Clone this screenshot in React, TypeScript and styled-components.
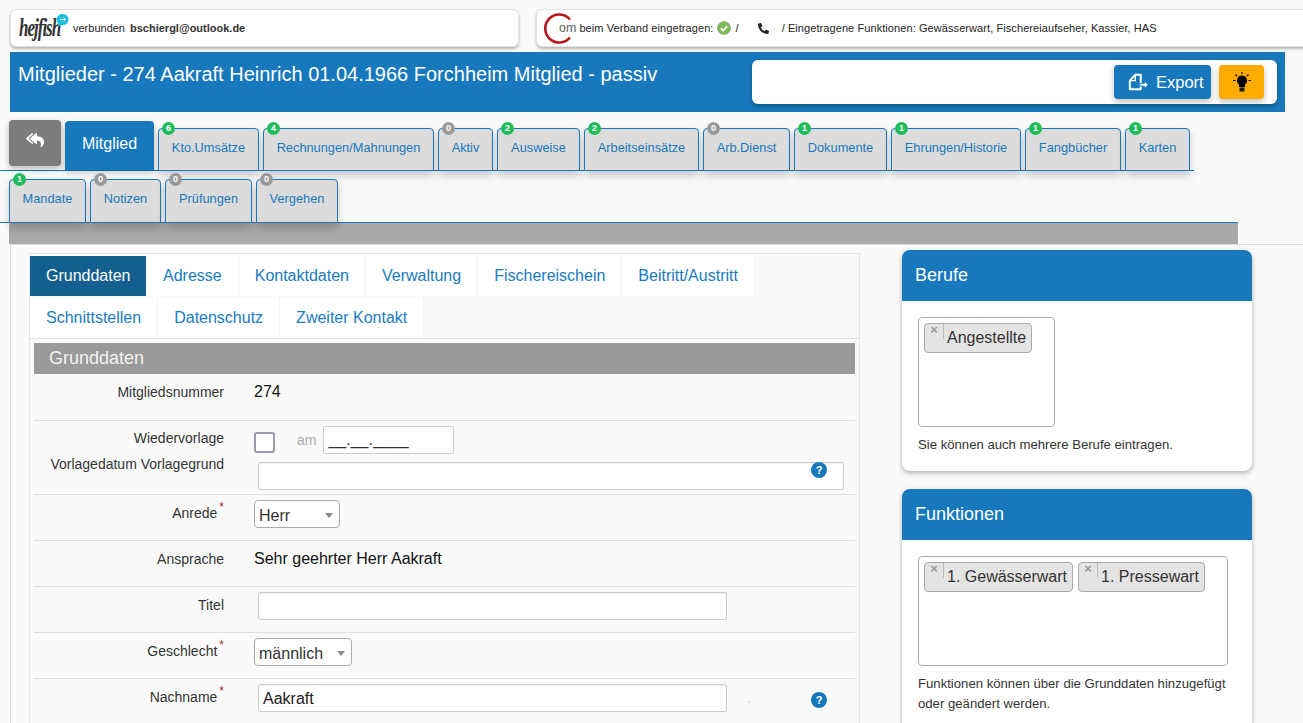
import * as React from 'react';
import styled, { createGlobalStyle } from 'styled-components';
import { FaPhoneAlt, FaReplyAll } from 'react-icons/fa';

const BLUE = '#1778bb';

const GlobalStyle = createGlobalStyle`
  html, body {
    margin: 0;
    padding: 0;
    background: #fafafa;
    font-family: "Liberation Sans", Arial, sans-serif;
  }
  * {
    box-sizing: border-box;
  }
`;

const Page = styled.div`
  width: 1303px;
  height: 723px;
  overflow: hidden;
  background: #fafafa;
  color: #333;
`;

const TopBar = styled.div`
  display: flex;
  padding: 9px 0 0 10px;
  gap: 17px;
`;

const TopCard = styled.div<{ $wide?: boolean }>`
  display: flex;
  align-items: center;
  height: 38px;
  width: ${(p) => (p.$wide ? '780px' : '509px')};
  padding-left: ${(p) => (p.$wide ? '7px' : '8px')};
  flex-shrink: 0;
  background: #fff;
  border: 1px solid #e2e2e2;
  border-radius: 6px;
  box-shadow: 0 2px 3px rgba(0, 0, 0, 0.28);
  font-size: 11px;
  letter-spacing: ${(p) => (p.$wide ? '0.08px' : '0')};
  color: #222;
  white-space: nowrap;
`;

const FishLogo = styled.div`
  position: relative;
  width: 54px;
  flex-shrink: 0;
`;

const FishWord = styled.span`
  display: inline-block;
  font-family: "Liberation Serif", serif;
  font-style: italic;
  font-weight: 700;
  font-size: 17px;
  letter-spacing: -1px;
  color: #333;
  transform: scaleY(1.5);
`;

const FishBubble = styled.svg`
  position: absolute;
  left: 38px;
  top: -4px;
`;

const Email = styled.b`
  margin-left: 5px;
  font-weight: 700;
  color: #333;
`;

const ComLogo = styled.div`
  display: flex;
  align-items: center;
  margin-right: 3px;
`;

const ComOm = styled.span`
  margin-left: -16px;
  font-size: 12.5px;
  letter-spacing: 0;
  color: #666;
`;

const PhoneGap = styled.span`
  display: inline-flex;
  margin: 0 13px 0 19px;
  font-size: 11px;
  color: #222;
`;

const CheckIcon = styled.svg`
  margin: 0 4px;
`;

const Header = styled.header`
  display: flex;
  justify-content: space-between;
  height: 60px;
  width: 1275px;
  margin: 5px 0 0 10px;
  padding: 8px;
  background: ${BLUE};
`;

const HeaderTitle = styled.h1`
  margin: 3px 0 0;
  font-size: 20px;
  font-weight: 400;
  color: #fff;
`;

const ActionBox = styled.div`
  display: flex;
  justify-content: flex-end;
  align-items: center;
  gap: 8px;
  width: 525px;
  height: 44px;
  padding-right: 13px;
  background: #fff;
  border-radius: 6px;
  box-shadow: 0 2px 4px rgba(0, 0, 0, 0.3);
`;

const ExportButton = styled.button`
  display: flex;
  align-items: center;
  gap: 8px;
  width: 97px;
  height: 34px;
  padding: 1px 0 0 14px;
  border: 0;
  border-radius: 4px;
  background: ${BLUE};
  color: #fff;
  font: 400 16.5px "Liberation Sans", Arial, sans-serif;
  box-shadow: 0 3px 6px rgba(0, 0, 0, 0.25);
`;

const LightButton = styled.button`
  display: flex;
  align-items: center;
  justify-content: center;
  width: 45px;
  height: 34px;
  padding: 0;
  border: 0;
  border-radius: 4px;
  background: #ffab00;
  box-shadow: 0 3px 6px rgba(0, 0, 0, 0.25);
`;

const TabRowOne = styled.nav`
  display: flex;
  align-items: flex-end;
  gap: 4px;
  width: 1194px;
  height: 51px;
  margin-top: 8px;
  padding-left: 9px;
  border-bottom: 1px solid ${BLUE};
`;

const TabRowTwo = styled.nav`
  display: flex;
  align-items: flex-end;
  gap: 4px;
  width: 1238px;
  height: 44px;
  margin-top: 8px;
  padding-left: 9px;
  border-bottom: 1px solid ${BLUE};
`;

const BackButton = styled.button`
  display: flex;
  flex-shrink: 0;
  align-items: center;
  justify-content: center;
  width: 52px;
  height: 46px;
  margin-bottom: 4px;
  padding: 0 0 6px;
  border: 0;
  border-radius: 4px;
  background: #7c7c7c;
  color: #fff;
  font-size: 18px;
  box-shadow: 0 3px 6px rgba(0, 0, 0, 0.25);
`;

const ActiveTab = styled.div`
  display: flex;
  flex-shrink: 0;
  align-items: center;
  justify-content: center;
  width: 89px;
  height: 49px;
  padding-bottom: 3px;
  background: ${BLUE};
  border-radius: 4px 4px 0 0;
  color: #fff;
  font-size: 16px;
  box-shadow: 0 3px 6px rgba(0, 0, 0, 0.2);
`;

const Tab = styled.div<{ $width: number; $tall?: boolean }>`
  position: relative;
  display: flex;
  flex-shrink: 0;
  align-items: center;
  justify-content: center;
  width: ${(p) => p.$width}px;
  height: ${(p) => (p.$tall ? '44px' : '43px')};
  margin-bottom: -1px;
  padding-bottom: 5px;
  border: 1px solid ${BLUE};
  border-radius: 4px 4px 0 0;
  background: #dcdcdc;
  color: ${BLUE};
  font-size: 12.8px;
  white-space: nowrap;
  box-shadow: 0 5px 9px rgba(0, 0, 0, 0.2);
`;

const Badge = styled.span<{ $on: boolean }>`
  position: absolute;
  left: 3px;
  top: -7px;
  width: 13px;
  height: 13px;
  border-radius: 50%;
  background: ${(p) => (p.$on ? '#1ebc5a' : '#9a9a9a')};
  color: #fff;
  font-size: 9px;
  font-weight: 700;
  line-height: 13px;
  text-align: center;
`;

const GreyBar = styled.div`
  width: 1229px;
  height: 21px;
  margin-left: 9px;
  background: #a9a9a9;
`;

const Body = styled.main`
  display: flex;
  align-items: flex-start;
  margin-left: 10px;
  padding: 5px 0 0 18px;
  border-top: 1px solid #dcdcdc;
  border-left: 1px solid #dcdcdc;
  height: 480px;
`;

const FormPanel = styled.section`
  flex-shrink: 0;
  width: 831px;
  margin-top: 3px;
  padding-top: 2px;
  border: 1px solid #e6e6e6;
  border-bottom: 0;
`;

const SubTabs = styled.div`
  display: flex;
  flex-direction: column;
  gap: 2px;
  border-bottom: 1px solid #e0e0e0;
`;

const SubTabRow = styled.div`
  display: flex;
`;

const SubTab = styled.div`
  height: 40px;
  padding: 0 16px;
  border-right: 1px solid #f4f4f4;
  background: #fff;
  color: #1a7cc0;
  font-size: 16px;
  line-height: 40px;
`;

const ActiveSubTab = styled.div`
  width: 116px;
  height: 40px;
  margin-right: 1px;
  padding-left: 16px;
  background: #13608f;
  color: #fff;
  font-size: 16px;
  line-height: 40px;
  box-shadow: 1px 0 0 #fff;
`;

const SectionTitle = styled.h2`
  height: 31px;
  margin: 4px 4px 0;
  padding-left: 15px;
  background: #9a9a9a;
  color: #f2f2f2;
  font-size: 18px;
  font-weight: 400;
  line-height: 30px;
`;

const Row = styled.div<{ $height: number }>`
  display: flex;
  position: relative;
  height: ${(p) => p.$height}px;
  margin: 0 4px;
  padding-top: 5px;
  border-bottom: 1px solid #dedede;
`;

const LabelColumn = styled.div<{ $raised?: boolean }>`
  flex-shrink: 0;
  width: 190px;
  margin: ${(p) => (p.$raised ? '-1px' : '0')} 30px 0 0;
  text-align: right;
`;

const Label = styled.div`
  font-size: 14px;
  line-height: 26px;
  color: #333;
`;

const Star = styled.sup`
  margin-left: 2px;
  font-size: 12px;
  line-height: 0;
  vertical-align: 7px;
  color: #a52a2a;
`;

const ValueText = styled.div`
  font-size: 16px;
  line-height: 26px;
  color: #111;
`;

const TextInput = styled.div<{ $width: number; $top?: number }>`
  width: ${(p) => p.$width}px;
  height: 28px;
  margin: ${(p) => p.$top ?? 0}px 0 0 4px;
  padding-left: 4px;
  background: #fff;
  border: 1px solid #ccc;
  border-radius: 2px;
  box-shadow: inset 0 1px 1px rgba(0, 0, 0, 0.06);
  font-size: 16px;
  line-height: 28px;
  color: #222;
`;

const Select = styled.div<{ $width: number }>`
  display: flex;
  align-items: center;
  justify-content: space-between;
  width: ${(p) => p.$width}px;
  height: 28px;
  padding: 3px 6px 0 4px;
  background: #fff;
  border: 1px solid #aaa;
  border-radius: 4px;
  font-size: 16px;
  color: #333;
`;

const Caret = styled.span`
  width: 0;
  height: 0;
  border-left: 4px solid transparent;
  border-right: 4px solid transparent;
  border-top: 5px solid #888;
`;

const DateLine = styled.div`
  display: flex;
  align-items: flex-start;
`;

const Checkbox = styled.div`
  width: 21px;
  height: 21px;
  margin-top: 6px;
  background: #fff;
  border: 2px solid #9a9aa8;
  border-radius: 3px;
`;

const AmLabel = styled.span`
  margin: 5px 7px 0 22px;
  font-size: 14px;
  line-height: 18px;
  color: #aaa;
`;

const DateInput = styled.div`
  width: 131px;
  height: 28px;
  padding-left: 4px;
  background: #fff;
  border: 1px solid #ccc;
  border-radius: 2px;
  font-size: 16px;
  line-height: 26px;
  color: #333;
`;

const Help = styled.span<{ $top: number }>`
  position: absolute;
  left: 777px;
  top: ${(p) => p.$top}px;
  width: 16px;
  height: 16px;
  border-radius: 50%;
  background: ${BLUE};
  color: #fff;
  font-size: 11px;
  font-weight: 700;
  line-height: 16px;
  text-align: center;
`;

const TinyMark = styled.span`
  position: absolute;
  left: 714px;
  top: 16px;
  font-size: 8px;
  color: #999;
`;

const SideColumn = styled.aside`
  display: flex;
  flex-direction: column;
  flex-shrink: 0;
  gap: 18px;
  width: 350px;
  margin-left: 42px;
`;

const Card = styled.section`
  background: #fff;
  border-radius: 8px;
  box-shadow: 0 2px 5px rgba(0, 0, 0, 0.3);
  overflow: hidden;
`;

const CardHead = styled.h3`
  height: 51px;
  margin: 0;
  padding-left: 13px;
  background: ${BLUE};
  color: #fff;
  font-size: 18px;
  font-weight: 400;
  line-height: 50px;
`;

const CardBody = styled.div`
  padding: 16px;
`;

const ChipBox = styled.div<{ $width: number }>`
  display: flex;
  align-items: flex-start;
  gap: 5px;
  width: ${(p) => p.$width}px;
  height: 110px;
  padding: 5px;
  border: 1px solid #aaa;
  border-radius: 4px;
  background: #fff;
`;

const Chip = styled.div`
  display: flex;
  height: 30px;
  padding-right: 5px;
  background: #e4e4e4;
  border: 1px solid #aaa;
  border-radius: 4px;
  font-size: 16px;
  line-height: 28px;
  color: #333;
  white-space: nowrap;
`;

const ChipClose = styled.span`
  align-self: flex-start;
  width: 19px;
  height: 15px;
  margin-right: 3px;
  border-right: 1px solid #bbb;
  color: #999;
  font-size: 13px;
  font-weight: 700;
  line-height: 12px;
  text-align: center;
`;

const CardNote = styled.p`
  margin: 8px 0 0;
  font-size: 13.15px;
  line-height: 20px;
  color: #333;
`;

const mainTabs = [
  { name: 'Kto.Umsätze', n: 6, width: 101 },
  { name: 'Rechnungen/Mahnungen', n: 4, width: 171 },
  { name: 'Aktiv', n: 0, width: 55 },
  { name: 'Ausweise', n: 2, width: 83 },
  { name: 'Arbeitseinsätze', n: 2, width: 115 },
  { name: 'Arb.Dienst', n: 0, width: 87 },
  { name: 'Dokumente', n: 1, width: 93 },
  { name: 'Ehrungen/Historie', n: 1, width: 130 },
  { name: 'Fangbücher', n: 1, width: 96 },
  { name: 'Karten', n: 1, width: 65 },
];

const moreTabs = [
  { name: 'Mandate', n: 1, width: 77 },
  { name: 'Notizen', n: 0, width: 71 },
  { name: 'Prüfungen', n: 0, width: 87 },
  { name: 'Vergehen', n: 0, width: 82 },
];

const subTabs = ['Adresse', 'Kontaktdaten', 'Verwaltung', 'Fischereischein', 'Beitritt/Austritt'];

const subTabsTwo = ['Schnittstellen', 'Datenschutz', 'Zweiter Kontakt'];

const ExportIcon = () => (
  <svg width="20" height="19" viewBox="0 0 22 20" fill="none">
    <path d="M8 1.5h6v16H2V8z" stroke="#fff" strokeWidth="2.2" strokeLinejoin="round" />
    <path d="M8 1.5V8H2" stroke="#fff" strokeWidth="1.5" />
    <path d="M13 11h5V8l4 4.5-4 4.5v-3h-5z" fill="#fff" stroke={BLUE} strokeWidth="1" />
  </svg>
);

const BulbIcon = () => (
  <svg width="18" height="20" viewBox="0 0 18 20">
    <path d="M9 3.5a5 5 0 0 1 3 9V15H6v-2.5a5 5 0 0 1 3-9z" fill="#000" />
    <rect x="6.5" y="15.5" width="5" height="4" fill="#1d1d1d" />
    <path d="M9 0v2M2.5 2.5l1.5 1.5M15.5 2.5L14 4M0 8.5h2.5M15.5 8.5H18" stroke="#000" strokeWidth="1.2" />
  </svg>
);

export default function App() {
  return (
    <Page>
      <GlobalStyle />
      <TopBar>
        <TopCard>
          <FishLogo>
            <FishWord>hejfish</FishWord>
            <FishBubble width="12" height="13" viewBox="0 0 12 13">
              <path d="M6 0a5.5 5.5 0 0 1 0 11H3l-2 2V9A5.5 5.5 0 0 1 6 0z" fill="#1cc0de" />
              <path d="M3 5.5h5M6.5 4l2 1.5-2 1.5" stroke="#fff" strokeWidth="1" fill="none" />
            </FishBubble>
          </FishLogo>
          verbunden
          <Email>bschiergl@outlook.de</Email>
        </TopCard>
        <TopCard $wide>
          <ComLogo>
            <svg width="31" height="31" viewBox="0 0 31 31" fill="none">
              <path d="M26 6.5A14 14 0 1 0 26 24.5" stroke="#b5191f" strokeWidth="2.6" />
            </svg>
            <ComOm>om</ComOm>
          </ComLogo>
          beim Verband eingetragen:
          <CheckIcon width="14" height="14" viewBox="0 0 14 14">
            <circle cx="7" cy="7" r="6.6" fill="#7cba58" stroke="#9bb58a" strokeWidth="0.8" />
            <path d="M3.8 7.2l2.3 2.3 4.2-4.4" stroke="#fff" strokeWidth="1.7" fill="none" />
          </CheckIcon>
          /
          <PhoneGap>
            <FaPhoneAlt />
          </PhoneGap>
          / Eingetragene Funktionen: Gewässerwart, Fischereiaufseher, Kassier, HAS
        </TopCard>
      </TopBar>

      <Header>
        <HeaderTitle>Mitglieder - 274 Aakraft Heinrich 01.04.1966 Forchheim Mitglied - passiv</HeaderTitle>
        <ActionBox>
          <ExportButton>
            <ExportIcon />
            Export
          </ExportButton>
          <LightButton>
            <BulbIcon />
          </LightButton>
        </ActionBox>
      </Header>

      <TabRowOne>
        <BackButton>
          <FaReplyAll />
        </BackButton>
        <ActiveTab>Mitglied</ActiveTab>
        {mainTabs.map((t) => (
          <Tab key={t.name} $width={t.width}>
            <Badge $on={t.n > 0}>{t.n}</Badge>
            {t.name}
          </Tab>
        ))}
      </TabRowOne>
      <TabRowTwo>
        {moreTabs.map((t) => (
          <Tab key={t.name} $width={t.width} $tall>
            <Badge $on={t.n > 0}>{t.n}</Badge>
            {t.name}
          </Tab>
        ))}
      </TabRowTwo>
      <GreyBar />

      <Body>
        <FormPanel>
          <SubTabs>
            <SubTabRow>
              <ActiveSubTab>Grunddaten</ActiveSubTab>
              {subTabs.map((t) => (
                <SubTab key={t}>{t}</SubTab>
              ))}
            </SubTabRow>
            <SubTabRow>
              {subTabsTwo.map((t) => (
                <SubTab key={t}>{t}</SubTab>
              ))}
            </SubTabRow>
          </SubTabs>
          <SectionTitle>Grunddaten</SectionTitle>

          <Row $height={47}>
            <LabelColumn>
              <Label>Mitgliedsnummer</Label>
            </LabelColumn>
            <ValueText>274</ValueText>
          </Row>

          <Row $height={74}>
            <LabelColumn $raised>
              <Label>Wiedervorlage</Label>
              <Label>Vorlagedatum Vorlagegrund</Label>
            </LabelColumn>
            <div>
              <DateLine>
                <Checkbox />
                <AmLabel>am</AmLabel>
                <DateInput>__.__.____</DateInput>
              </DateLine>
              <TextInput $width={586} $top={8} />
            </div>
            <Help $top={41}>?</Help>
          </Row>

          <Row $height={46}>
            <LabelColumn>
              <Label>
                Anrede<Star>*</Star>
              </Label>
            </LabelColumn>
            <Select $width={86}>
              Herr
              <Caret />
            </Select>
          </Row>

          <Row $height={46}>
            <LabelColumn>
              <Label>Ansprache</Label>
            </LabelColumn>
            <ValueText>Sehr geehrter Herr Aakraft</ValueText>
          </Row>

          <Row $height={46}>
            <LabelColumn>
              <Label>Titel</Label>
            </LabelColumn>
            <TextInput $width={469} />
          </Row>

          <Row $height={46}>
            <LabelColumn>
              <Label>
                Geschlecht<Star>*</Star>
              </Label>
            </LabelColumn>
            <Select $width={98}>
              männlich
              <Caret />
            </Select>
          </Row>

          <Row $height={46}>
            <LabelColumn>
              <Label>
                Nachname<Star>*</Star>
              </Label>
            </LabelColumn>
            <TextInput $width={469}>Aakraft</TextInput>
            <TinyMark>,</TinyMark>
            <Help $top={13}>?</Help>
          </Row>
        </FormPanel>

        <SideColumn>
          <Card>
            <CardHead>Berufe</CardHead>
            <CardBody>
              <ChipBox $width={137}>
                <Chip>
                  <ChipClose>×</ChipClose>
                  Angestellte
                </Chip>
              </ChipBox>
              <CardNote>Sie können auch mehrere Berufe eintragen.</CardNote>
            </CardBody>
          </Card>
          <Card>
            <CardHead>Funktionen</CardHead>
            <CardBody>
              <ChipBox $width={310}>
                <Chip>
                  <ChipClose>×</ChipClose>
                  1. Gewässerwart
                </Chip>
                <Chip>
                  <ChipClose>×</ChipClose>
                  1. Pressewart
                </Chip>
              </ChipBox>
              <CardNote>Funktionen können über die Grunddaten hinzugefügt oder geändert werden.</CardNote>
            </CardBody>
          </Card>
        </SideColumn>
      </Body>
    </Page>
  );
}
